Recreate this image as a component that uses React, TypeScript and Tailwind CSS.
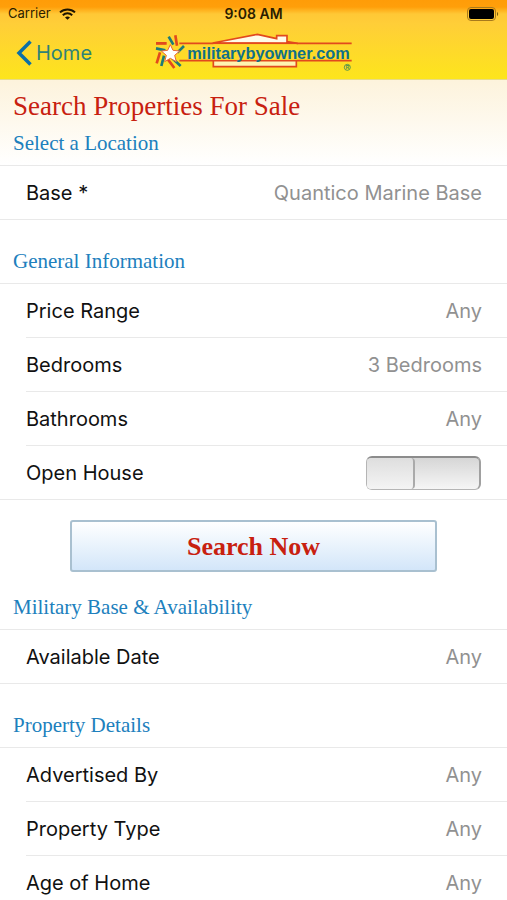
import React, { useState } from "react";

interface Field {
  id: string;
  label: string;
  options: string[];
}

const locationFields: Field[] = [
  { id: "base", label: "Base *", options: ["Quantico Marine Base"] },
];

const generalFields: Field[] = [
  { id: "price", label: "Price Range", options: ["Any"] },
  { id: "bedrooms", label: "Bedrooms", options: ["3 Bedrooms"] },
  { id: "bathrooms", label: "Bathrooms", options: ["Any"] },
];

const availabilityFields: Field[] = [
  { id: "available", label: "Available Date", options: ["Any"] },
];

const detailFields: Field[] = [
  { id: "advertised", label: "Advertised By", options: ["Any"] },
  { id: "type", label: "Property Type", options: ["Any"] },
  { id: "age", label: "Age of Home", options: ["Any"] },
];

function StatusBar() {
  return (
    <div className="grid h-[25px] grid-cols-[1fr_auto_1fr] items-center px-2 pt-0.5 text-[13px] text-[#2b1d00]">
      <div className="flex items-center gap-2">
        <span>Carrier</span>
        <svg viewBox="0 0 17 12" className="h-3 w-[17px]" fill="none" stroke="#1c1400" strokeWidth="2">
          <path d="M1 4.4C5.2.4 11.8.4 16 4.4" />
          <path d="M3.8 7.2c2.7-2.5 6.7-2.5 9.4 0" />
          <path d="M8.5 11.8 6 9.4c1.5-1.3 3.5-1.3 5 0z" fill="#1c1400" stroke="none" />
        </svg>
      </div>
      <span className="text-sm font-semibold">9:08 AM</span>
      <svg viewBox="0 0 32 14" className="h-[14px] w-8 justify-self-end" fill="none">
        <rect x="0.5" y="0.5" width="28" height="13" rx="3.5" stroke="#a87a1c" />
        <rect x="2" y="2" width="25" height="10" rx="2" fill="#000" />
        <path d="M30 5v4c1.6-.6 1.6-3.4 0-4z" fill="#7a5a10" />
      </svg>
    </div>
  );
}

function Logo() {
  return (
    <svg viewBox="0 0 621 165" className="h-[55px] w-[207px]" role="img" aria-label="militarybyowner.com">
      <g fill="none" stroke="#e2491d" strokeWidth="5">
        <path d="M190 107v18h249v-18" fill="#fff4b0" />
        <path d="M188 54 322 28l58 13V32h31v18l32 5z" fill="#fffbe8" />
        <path d="M18 55H46M88 55H605M88 107H605" />
      </g>
      <path d="M190 58H440V104H190z" fill="#ffd92b" />
      <g strokeWidth="8" fill="none">
        <path d="M56 35 70 59M102 63 82 83M66 99 92 123M42 92 34 123M18 70 46 76" stroke="#1f7a78" />
        <path d="M76 31 81 62M52 101 73 129M30 82 20 115M18 55H50" stroke="#e2491d" />
      </g>
      <path
        d="M61 59l8 17 20 2-15 13 5 19-18-10-17 10 5-19-15-13 19-2z"
        fill="#fff"
        stroke="#e8683a"
        strokeWidth="3"
      />
      <text x="112" y="101" fontSize="49" fontWeight="700" fontFamily="Liberation Sans, Arial, sans-serif" fill="#0f7089">
        militarybyowner.com
      </text>
      <circle cx="592" cy="127" r="9" fill="none" stroke="#3d8a55" strokeWidth="2.5" />
      <text x="587" y="132" fontSize="14" fontWeight="700" fontFamily="Liberation Sans, Arial, sans-serif" fill="#3d8a55">
        R
      </text>
    </svg>
  );
}

function NavBar() {
  return (
    <nav className="grid h-[55px] grid-cols-[1fr_auto_1fr] items-center">
      <a href="#home" className="flex items-center gap-1 pl-4 text-xl text-[#2f8377]">
        <svg viewBox="0 0 16 26" className="h-[26px] w-4" fill="none" stroke="#0c6fa6" strokeWidth="3.5">
          <path d="M14.5 1.5 3 13l11.5 11.5" />
        </svg>
        Home
      </a>
      <Logo />
    </nav>
  );
}

function SectionHeading({ children }: { children: React.ReactNode }) {
  return (
    <h2 className="px-[13px] pb-2 font-['Liberation_Serif',Georgia,serif] text-[21px] leading-7 text-[#2080bd]">
      {children}
    </h2>
  );
}

function FieldGroup({ children }: { children: React.ReactNode }) {
  return (
    <div className="border-y border-[#e9e9e9] bg-white pl-[26px]">
      <div className="divide-y divide-[#e9e9e9]">{children}</div>
    </div>
  );
}

function SelectRow({ field }: { field: Field }) {
  return (
    <div className="box-content flex h-[53px] items-center">
      <label htmlFor={field.id} className="whitespace-nowrap">
        {field.label}
      </label>
      <select
        id={field.id}
        className="mr-[25px] min-w-0 flex-1 appearance-none bg-transparent text-right text-[#919191] outline-none [text-align-last:right]"
      >
        {field.options.map((option) => (
          <option key={option}>{option}</option>
        ))}
      </select>
    </div>
  );
}

export default function App() {
  const [openHouse, setOpenHouse] = useState(false);

  return (
    <div className="h-screen overflow-hidden bg-white font-[Inter,sans-serif] text-[20px] text-[#111]">
      <header className="h-20 border-b border-[#e8dc86] bg-[linear-gradient(#ff9c08_0px,#ff9f0a_7px,#ffc836_14px,#ffce38_24px,#fde51c_79px)]">
        <StatusBar />
        <NavBar />
      </header>

      <main>
        <section className="bg-linear-to-b from-[#fdf3dc] to-white">
          <h1 className="px-[13px] pt-2 font-['Liberation_Serif',Georgia,serif] text-[27px] leading-9 text-[#c8200f]">
            Search Properties For Sale
          </h1>
          <div className="pt-[5px]">
            <SectionHeading>Select a Location</SectionHeading>
          </div>
        </section>
        <FieldGroup>
          {locationFields.map((field) => (
            <SelectRow key={field.id} field={field} />
          ))}
        </FieldGroup>

        <section className="pt-[27px]">
          <SectionHeading>General Information</SectionHeading>
          <FieldGroup>
            {generalFields.map((field) => (
              <SelectRow key={field.id} field={field} />
            ))}
            <div className="box-content flex h-[53px] items-center justify-between">
              <label htmlFor="open-house">Open House</label>
              <input
                id="open-house"
                type="checkbox"
                checked={openHouse}
                onChange={(e) => setOpenHouse(e.target.checked)}
                className="mr-[26px] flex h-[34px] w-[115px] appearance-none rounded-md border border-t-2 border-r-2 border-[#b5b5b5] border-t-[#8c8c8c] border-r-[#a0a0a0] bg-linear-to-b from-[#d6d6d6] to-[#f6f6f6] before:w-12 before:rounded-sm before:border-r-2 before:border-[#aaa] before:bg-linear-to-b before:from-[#dedede] before:to-[#f4f4f4] checked:justify-end"
              />
            </div>
          </FieldGroup>
        </section>

        <div className="px-[70px] pt-5">
          <button
            type="button"
            className="h-[52px] w-full rounded-[3px] border-2 border-[#a9c0d0] bg-linear-to-b from-white to-[#d3e6f9] font-['Liberation_Serif',Georgia,serif] text-[26px] font-bold text-[#c8200f]"
          >
            Search Now
          </button>
        </div>

        <section className="pt-[21px]">
          <SectionHeading>Military Base &amp; Availability</SectionHeading>
          <FieldGroup>
            {availabilityFields.map((field) => (
              <SelectRow key={field.id} field={field} />
            ))}
          </FieldGroup>
        </section>

        <section className="pt-[27px]">
          <SectionHeading>Property Details</SectionHeading>
          <FieldGroup>
            {detailFields.map((field) => (
              <SelectRow key={field.id} field={field} />
            ))}
          </FieldGroup>
        </section>
      </main>
    </div>
  );
}
